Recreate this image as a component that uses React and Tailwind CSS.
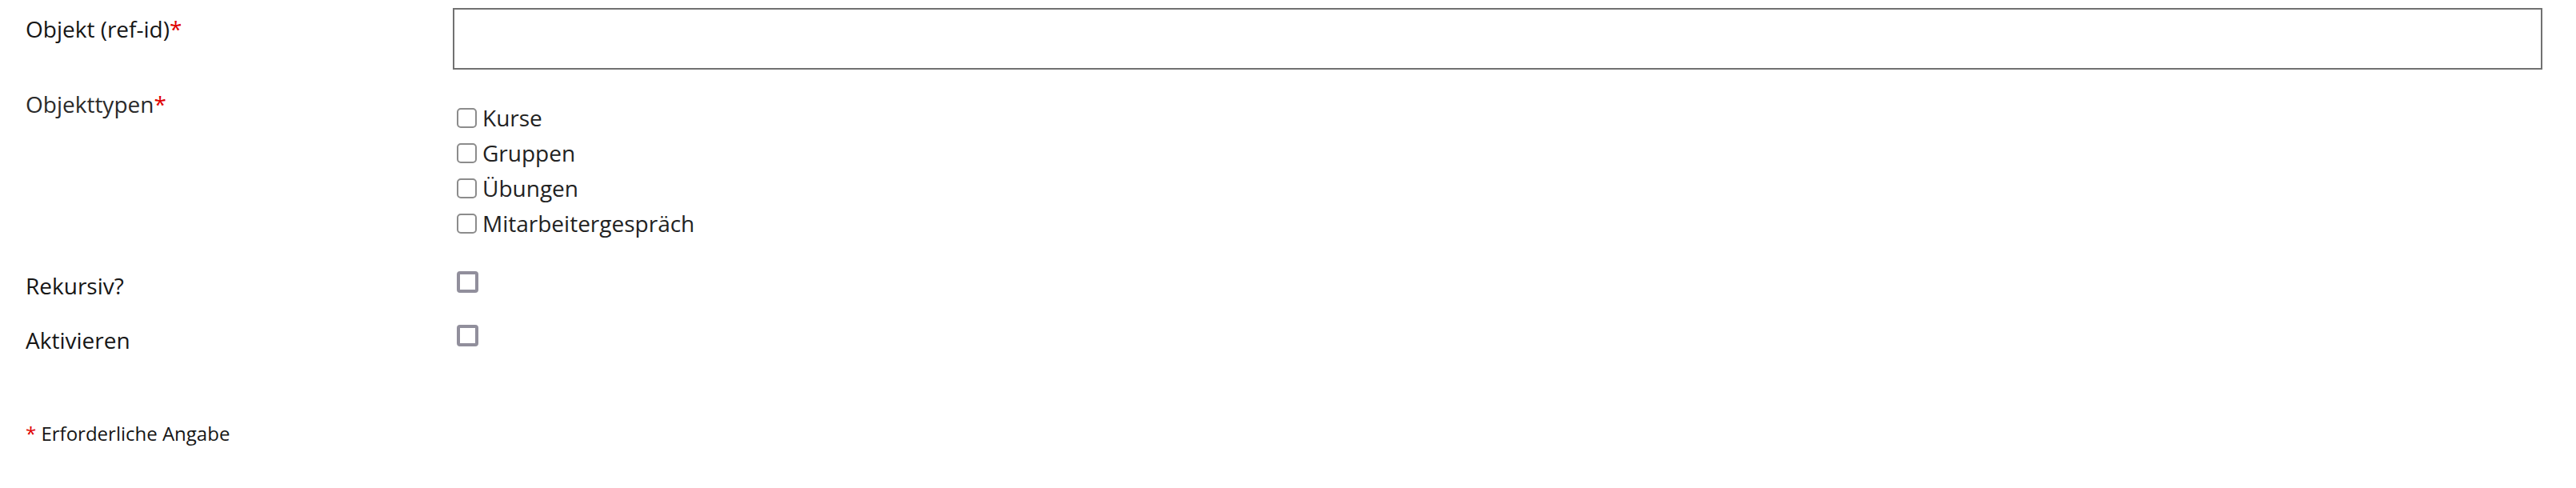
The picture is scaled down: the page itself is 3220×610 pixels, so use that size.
const types = ['Kurse', 'Gruppen', 'Übungen', 'Mitarbeitergespräch'];

function Req() {
  return <span className="text-[#e00000]">*</span>;
}

function SmallBox() {
  return <span className="w-[25px] h-[25px] ml-[5px] mr-[7px] shrink-0 rounded-[5px] border-2 border-[#8c8c8c] bg-white" />;
}

function BigBox() {
  return <span className="block w-[27px] h-[27px] ml-[5px] rounded-[4px] border-4 border-[#918f9c] bg-white" />;
}

export default function App() {
  return (
    <div className="w-[3220px] h-[610px] bg-white pl-8 pt-[10px] font-['Open_Sans',sans-serif] text-[#161616]">
      {/* Objekt */}
      <div className="flex">
        <label className="w-[534px] shrink-0 pt-[6px] text-[28px] leading-[40px]">
          Objekt (ref-id)<Req />
        </label>
        <input type="text" className="w-[2612px] h-[77px] border-2 border-[#717171] bg-white outline-none" />
      </div>

      {/* Objekttypen */}
      <div className="flex mt-[23px]">
        <label className="w-[534px] shrink-0 text-[28px] leading-[40px] text-[#2a2a2a]">
          Objekttypen<Req />
        </label>
        <div className="pt-[15px] flex flex-col">
          {types.map((t) => (
            <div key={t} className="flex items-center h-[44px] text-[28px] leading-[44px] text-[#222]">
              <SmallBox />
              <span>{t}</span>
            </div>
          ))}
        </div>
      </div>

      {/* Rekursiv */}
      <div className="flex mt-[38px]">
        <label className="w-[534px] shrink-0 -mt-[2px] text-[28px] leading-[40px]">Rekursiv?</label>
        <BigBox />
      </div>

      {/* Aktivieren */}
      <div className="flex mt-[29px]">
        <label className="w-[534px] shrink-0 -mt-[1px] text-[28px] leading-[40px]">Aktivieren</label>
        <BigBox />
      </div>

      <p className="mt-[81px] text-[24px] leading-[32px]">
        <Req /> Erforderliche Angabe
      </p>
    </div>
  );
}
